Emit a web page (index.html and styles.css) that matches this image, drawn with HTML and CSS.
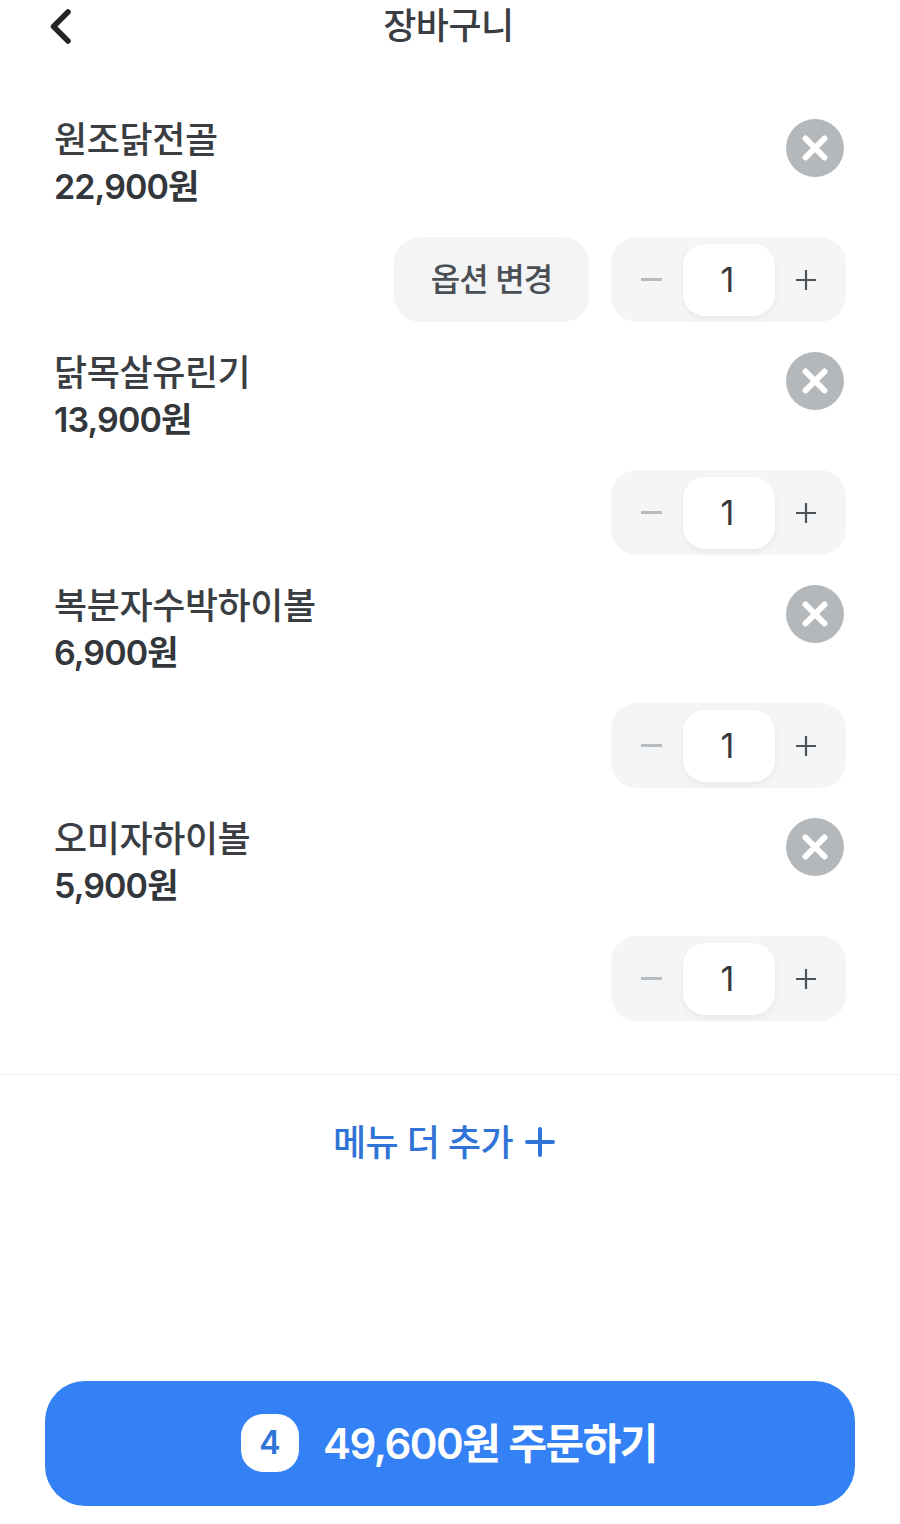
FILE: index.html
```html
<!DOCTYPE html>
<html lang="ko">
<head>
<meta charset="utf-8">
<title>장바구니</title>
<link rel="stylesheet" href="styles.css">
</head>
<body>
<div class="page">
  <header class="header">
    <svg class="back" viewBox="0 0 26 40" width="26" height="40"><path d="M21 5 6.500 19.500 21 34" fill="none" stroke="#222426" stroke-width="5.500" stroke-linecap="round" stroke-linejoin="round"/></svg>
    <h1 class="title">장바구니</h1>
  </header>
  <section class="list">
    <article class="item">
      <div class="row">
        <div class="info"><div class="name">원조닭전골</div><div class="price">22,900원</div></div>
        <button class="close"><svg viewBox="0 0 58 58" width="58" height="58"><path d="M19.5 19.5 38.500 38.500M38.500 19.500 19.500 38.500" stroke="#fff" stroke-width="6" stroke-linecap="round"/></svg></button>
      </div>
      <div class="controls">
        <button class="option">옵션 변경</button>
        <div class="stepper"><span class="minus"></span><span class="count">1</span><svg class="plus" viewBox="0 0 22 22" width="22" height="22"><path d="M11 1V21M1 11H21" stroke="#4e5358" stroke-width="2.200"/></svg></div>
      </div>
    </article>
    <article class="item">
      <div class="row">
        <div class="info"><div class="name">닭목살유린기</div><div class="price">13,900원</div></div>
        <button class="close"><svg viewBox="0 0 58 58" width="58" height="58"><path d="M19.5 19.5 38.500 38.500M38.500 19.500 19.500 38.500" stroke="#fff" stroke-width="6" stroke-linecap="round"/></svg></button>
      </div>
      <div class="controls">
        <div class="stepper"><span class="minus"></span><span class="count">1</span><svg class="plus" viewBox="0 0 22 22" width="22" height="22"><path d="M11 1V21M1 11H21" stroke="#4e5358" stroke-width="2.200"/></svg></div>
      </div>
    </article>
    <article class="item">
      <div class="row">
        <div class="info"><div class="name">복분자수박하이볼</div><div class="price">6,900원</div></div>
        <button class="close"><svg viewBox="0 0 58 58" width="58" height="58"><path d="M19.5 19.5 38.500 38.500M38.500 19.500 19.500 38.500" stroke="#fff" stroke-width="6" stroke-linecap="round"/></svg></button>
      </div>
      <div class="controls">
        <div class="stepper"><span class="minus"></span><span class="count">1</span><svg class="plus" viewBox="0 0 22 22" width="22" height="22"><path d="M11 1V21M1 11H21" stroke="#4e5358" stroke-width="2.200"/></svg></div>
      </div>
    </article>
    <article class="item">
      <div class="row">
        <div class="info"><div class="name">오미자하이볼</div><div class="price">5,900원</div></div>
        <button class="close"><svg viewBox="0 0 58 58" width="58" height="58"><path d="M19.5 19.5 38.500 38.500M38.500 19.500 19.500 38.500" stroke="#fff" stroke-width="6" stroke-linecap="round"/></svg></button>
      </div>
      <div class="controls">
        <div class="stepper"><span class="minus"></span><span class="count">1</span><svg class="plus" viewBox="0 0 22 22" width="22" height="22"><path d="M11 1V21M1 11H21" stroke="#4e5358" stroke-width="2.200"/></svg></div>
      </div>
    </article>
  </section>
  <div class="more">
    <span>메뉴 더 추가</span>
    <svg class="more-plus" viewBox="0 0 30 30" width="30" height="30"><path d="M15 2V28M2 15H28" stroke="#2f74d6" stroke-width="4" stroke-linecap="round"/></svg>
  </div>
  <div class="spacer"></div>
  <button class="order">
    <span class="badge">4</span>
    <span class="order-text">49,600원 주문하기</span>
  </button>
</div>
</body>
</html>
```
FILE: styles.css
```css
* { box-sizing: border-box; }
html, body { margin: 0; padding: 0; background: #fff; }
body { font-family: "Inter", "Noto Sans CJK KR", sans-serif; color: #33373b; }
button { font: inherit; border: 0; padding: 0; margin: 0; }
.page { width: 900px; height: 1524px; display: flex; flex-direction: column; overflow: hidden; }
.header { height: 52px; display: flex; align-items: center; justify-content: center; padding-right: 3px; position: relative; }
.back { position: absolute; left: 47px; top: 7px; }
.title { margin: 0; font-size: 36px; font-weight: 500; line-height: 52px; color: #3a3e42; letter-spacing: -0.500px; }
.list { padding: 61px 54px 0 54px; display: flex; flex-direction: column; }
.item { height: 233px; display: flex; flex-direction: column; }
.row { height: 124px; padding-top: 4px; display: flex; justify-content: space-between; align-items: flex-start; }
.name { font-size: 36px; line-height: 47px; font-weight: 500; letter-spacing: -0.400px; color: #3a3e42; }
.price { font-size: 34px; line-height: 46px; font-weight: 600; letter-spacing: -0.900px; color: #33373b; }
.close { width: 58px; height: 58px; margin: 1.500px 2px 0 0; border-radius: 50%; background: #b4b8bb; display: flex; }
.controls { display: flex; justify-content: flex-end; gap: 22px; }
.option { width: 195px; height: 85px; padding-bottom: 6px; border-radius: 26px; background: #f3f4f6; font-size: 32px; font-weight: 500; letter-spacing: -1px; color: #4b4f54; }
.stepper { width: 235px; height: 85px; border-radius: 26px; background: #f3f5f7; display: flex; align-items: center; padding: 0 0 0 30px; position: relative; }
.minus { width: 21px; height: 2.500px; background: #b9bcbe; }
.count { width: 92px; height: 72px; margin-left: 21px; margin-right: 20px; padding-right: 3px; border-radius: 22px; background: #fff; box-shadow: 0 3px 6px rgba(0, 0, 0, 0.05); display: flex; align-items: center; justify-content: center; font-size: 34px; color: #33373b; }
.more { margin-top: 29px; border-top: 1px solid #eceef0; height: 132px; padding: 0 12px 2px 0; display: flex; align-items: center; justify-content: center; gap: 12px; color: #2f74d6; font-size: 36px; font-weight: 500; letter-spacing: -0.700px; }
.more-plus { margin-top: 4px; }
.spacer { flex: 1; }
.order { margin: 0 45px 18px; padding-right: 2px; height: 125px; border-radius: 40px; background: #3381f4; display: flex; align-items: center; justify-content: center; gap: 24px; color: #fff; }
.badge { width: 58px; height: 58px; margin-bottom: 2px; border-radius: 22px; background: #fff; color: #2f74d6; font-size: 32px; font-weight: 600; display: flex; align-items: center; justify-content: center; }
.order-text { font-size: 42px; font-weight: 600; letter-spacing: -1.500px; padding-bottom: 6px; }
```
